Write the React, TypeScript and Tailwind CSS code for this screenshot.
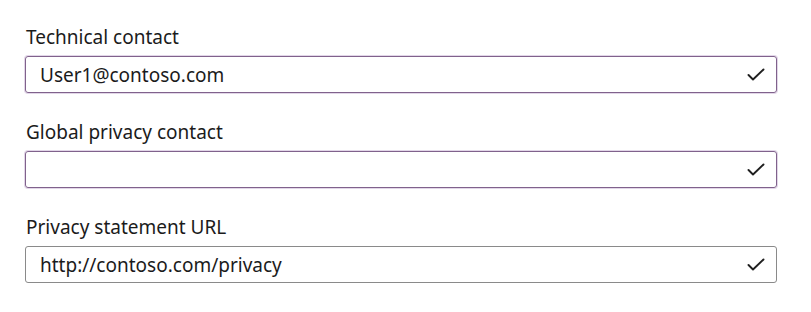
import React from 'react';

const fields = [
  { label: 'Technical contact', value: 'User1@contoso.com', accent: true },
  { label: 'Global privacy contact', value: '', accent: true },
  { label: 'Privacy statement URL', value: 'http://contoso.com/privacy', accent: false },
];

const CheckMark = () => (
  <svg width="18" height="13" viewBox="0 0 18 13" fill="none">
    <path d="M1.5 7 L6 11.5 L16.5 1.5" stroke="#1f1f1f" strokeWidth="1.9" strokeLinecap="round" strokeLinejoin="round" />
  </svg>
);

export default function App() {
  return (
    <div
      className="w-[811px] h-[312px] bg-white pt-[26px] pl-[25px] pr-[34px] text-[#1b1b1b]"
      style={{ fontFamily: '"Noto Sans", "Open Sans", sans-serif' }}
    >
      <div className="flex flex-col gap-[28px]">
        {fields.map((f) => (
          <div key={f.label} className="flex flex-col gap-[8px]">
            <label className="text-[19px] leading-[22px] pl-[1px]">{f.label}</label>
            <div
              className={`h-[37px] flex items-center justify-between rounded-[3px] border pl-[14px] pr-[11px] ${
                f.accent ? 'border-[#80628c] shadow-[0_0_0_1px_rgba(160,120,180,0.3)]' : 'border-[#8a8a8a]'
              }`}
            >
              <span className="text-[19px] leading-[22px]">{f.value}</span>
              <CheckMark />
            </div>
          </div>
        ))}
      </div>
    </div>
  );
}
